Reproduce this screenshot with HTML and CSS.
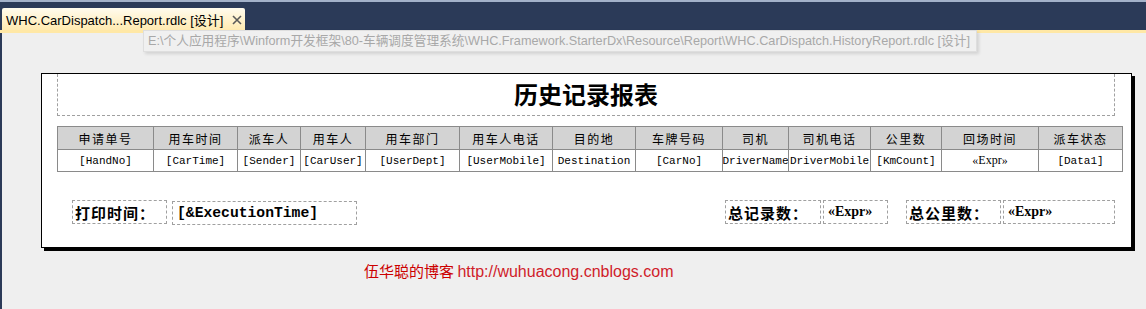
FILE: index.html
```html
<!DOCTYPE html>
<html lang="zh-CN">
<head>
    <meta charset="UTF-8">
    <meta name="viewport" content="width=device-width, initial-scale=1.0">
    <title>WHC.CarDispatch.HistoryReport.rdlc [设计]</title>
    <link rel="stylesheet" href="styles.css">
</head>
<body>
    <div class="tabbar">
        <div class="tab">
            <span class="tab-title">WHC.CarDispatch...Report.rdlc [设计]</span>
            <svg class="tab-close" width="10" height="10" viewBox="0 0 10 10">
                <path d="M1 1 L9 9 M9 1 L1 9" stroke="#5a5a5a" stroke-width="1.6" fill="none"/>
            </svg>
        </div>
    </div>
    <div class="tab-line"></div>

    <div class="designer">
        <div class="tooltip">E:\个人应用程序\Winform开发框架\80-车辆调度管理系统\WHC.Framework.StarterDx\Resource\Report\WHC.CarDispatch.HistoryReport.rdlc [设计]</div>

        <div class="report">
            <div class="title-box">历史记录报表</div>

            <table class="grid">
                <colgroup>
                    <col class="c1"><col class="c2"><col class="c3"><col class="c4"><col class="c5">
                    <col class="c6"><col class="c7"><col class="c8"><col class="c9"><col class="c10">
                    <col class="c11"><col class="c12"><col class="c13">
                </colgroup>
                <tr class="head">
                    <th>申请单号</th>
                    <th>用车时间</th>
                    <th>派车人</th>
                    <th>用车人</th>
                    <th>用车部门</th>
                    <th>用车人电话</th>
                    <th>目的地</th>
                    <th>车牌号码</th>
                    <th>司机</th>
                    <th>司机电话</th>
                    <th>公里数</th>
                    <th>回场时间</th>
                    <th>派车状态</th>
                </tr>
                <tr class="data">
                    <td><div class="cell">[HandNo]</div></td>
                    <td><div class="cell">[CarTime]</div></td>
                    <td><div class="cell">[Sender]</div></td>
                    <td><div class="cell">[CarUser]</div></td>
                    <td><div class="cell">[UserDept]</div></td>
                    <td><div class="cell">[UserMobile]</div></td>
                    <td><div class="cell">Destination</div></td>
                    <td><div class="cell">[CarNo]</div></td>
                    <td><div class="cell"><span>[DriverName]</span></div></td>
                    <td><div class="cell"><span>[DriverMobile]</span></div></td>
                    <td><div class="cell">[KmCount]</div></td>
                    <td><div class="cell expr">«Expr»</div></td>
                    <td><div class="cell">[Data1]</div></td>
                </tr>
            </table>

            <div class="footer-row">
                <div class="box label print-label">打印时间：</div>
                <div class="box value exec-time">[&amp;ExecutionTime]</div>
                <div class="spacer"></div>
                <div class="box label count-label">总记录数：</div>
                <div class="box value expr-val count-val">«Expr»</div>
                <div class="box label km-label">总公里数：</div>
                <div class="box value expr-val km-val">«Expr»</div>
            </div>
        </div>

        <div class="credit">伍华聪的博客 <span class="url">http://wuhuacong.cnblogs.com</span></div>
    </div>
</body>
</html>
```

FILE: styles.css
```css
body {
    margin: 0;
    background-color: #efefef;
    font-family: "Liberation Sans", Arial, sans-serif;
    overflow: hidden;
}
.tabbar {
    height: 30px;
    background-color: #2b3a58;
    border-top: 2px solid #a3b1c9;
    box-sizing: border-box;
    padding: 6px 0 0 2px;
}
.tab {
    width: 243px;
    height: 22px;
    box-sizing: border-box;
    background: linear-gradient(#fffbee, #ffeab0);
    border-radius: 2px 2px 0 0;
    display: flex;
    align-items: center;
    padding-left: 4px;
    font-size: 13px;
    color: #000;
}
.tab-title {
    font-family: "Liberation Sans", "Noto Sans CJK SC", sans-serif;
    white-space: nowrap;
}
.tab-close {
    margin-left: 9px;
    margin-top: 2px;
}
.tab-line {
    height: 3px;
    background-color: #ffe8a6;
}
.designer {
    position: relative;
    height: 276px;
    border-left: 2px solid #2b3a58;
    padding-top: 40px;
    box-sizing: border-box;
}
.tooltip {
    position: absolute;
    left: 141px;
    top: -3px;
    width: 834px;
    height: 22px;
    box-sizing: border-box;
    background-color: #f0f0f0;
    border: 1px solid #dedede;
    box-shadow: 2px 2px 3px rgba(0, 0, 0, 0.12);
    padding-left: 4px;
    font-size: 12.7px;
    line-height: 20px;
    color: #a8a8a8;
    white-space: nowrap;
    font-family: "Liberation Sans", "Noto Sans CJK SC", sans-serif;
}
.report {
    margin-left: 39px;
    width: 1091px;
    height: 175px;
    box-sizing: border-box;
    background-color: #fff;
    border: 1px solid #000;
    box-shadow: 3px 3px 0 #000;
    padding-left: 15px;
}
.title-box {
    width: 1058px;
    height: 42px;
    box-sizing: border-box;
    border: 1px dashed #a0a0a0;
    border-top: none;
    text-align: center;
    font-family: "Noto Sans CJK SC", sans-serif;
    font-weight: bold;
    font-size: 24px;
    line-height: 40px;
    color: #000;
}
.grid {
    margin-top: 10px;
    width: 1065px;
    border-collapse: collapse;
    table-layout: fixed;
}
.c1 { width: 96px; }
.c2 { width: 84px; }
.c3 { width: 63px; }
.c4 { width: 65px; }
.c5 { width: 94px; }
.c6 { width: 93px; }
.c7 { width: 83px; }
.c8 { width: 87px; }
.c9 { width: 66px; }
.c10 { width: 82px; }
.c11 { width: 71px; }
.c12 { width: 97px; }
.c13 { width: 84px; }
.grid th, .grid td {
    border: 1px solid #8a8a8a;
    padding: 0;
    text-align: center;
}
.grid th {
    height: 22px;
    background-color: #d3d3d3;
    font-family: "Noto Sans CJK SC", sans-serif;
    font-weight: normal;
    font-size: 12px;
    letter-spacing: 1.5px;
    color: #000;
}
.grid td {
    height: 21px;
}
.cell {
    display: flex;
    justify-content: center;
    overflow: hidden;
    white-space: nowrap;
    font-family: "Liberation Mono", "Courier New", monospace;
    font-size: 11px;
    color: #000;
}
.cell span {
    flex-shrink: 0;
}
.cell.expr {
    font-family: "Liberation Serif", serif;
    font-size: 12px;
}
.footer-row {
    display: flex;
    align-items: flex-start;
    margin-top: 28px;
    padding-left: 15px;
    width: 1043px;
}
.box {
    height: 24px;
    box-sizing: border-box;
    border: 1px dashed #a0a0a0;
    display: flex;
    align-items: center;
    font-weight: bold;
    color: #000;
    white-space: nowrap;
}
.label {
    font-family: "Noto Sans CJK SC", sans-serif;
    font-size: 15px;
    letter-spacing: 1px;
    padding-left: 2px;
}
.print-label { width: 95px; }
.exec-time {
    margin-left: 5px;
    margin-top: 1px;
    width: 185px;
    font-family: "Liberation Mono", "Courier New", monospace;
    font-size: 14.7px;
    padding-left: 4px;
}
.spacer { flex: 1; }
.expr-val {
    font-family: "Liberation Serif", serif;
    font-size: 14px;
    padding-left: 4px;
}
.count-label { width: 96px; }
.count-val { margin-left: 2px; width: 65px; }
.km-label { margin-left: 18px; width: 95px; }
.km-val { margin-left: 2px; width: 112px; }
.credit {
    margin-top: 13px;
    margin-left: 362px;
    color: #cc0000;
    font-family: "Noto Sans CJK SC", sans-serif;
    font-size: 15px;
    line-height: 20px;
}
.url {
    font-family: "Liberation Sans", Arial, sans-serif;
    font-size: 16px;
    color: #d01c2a;
}
```
